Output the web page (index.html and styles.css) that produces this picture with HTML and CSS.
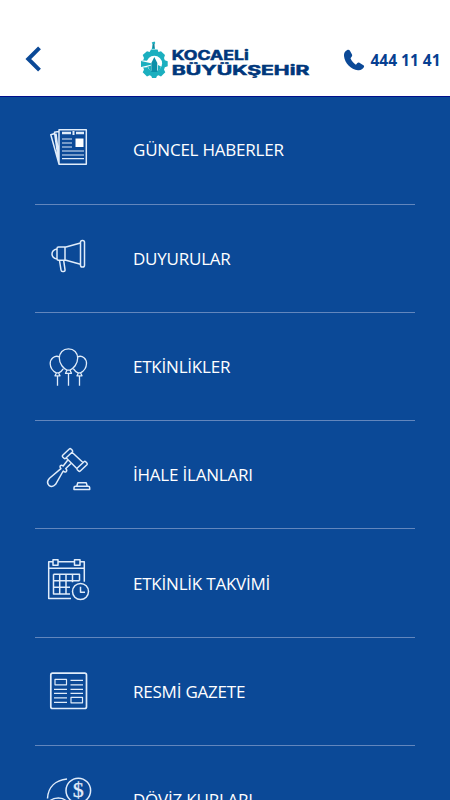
FILE: index.html
```html
<!DOCTYPE html>
<html lang="tr">
<head>
<meta charset="utf-8">
<title>Kocaeli Büyükşehir</title>
<link rel="stylesheet" href="styles.css">
</head>
<body>
<header class="header">
  <svg class="back" viewBox="0 0 20 26"><path d="M16.500 1.800 5.300 13l11.200 11.200" fill="none" stroke="#0b4997" stroke-width="4"/></svg>
  <svg class="logo" viewBox="130 34 190 54">
    <g fill="#1bafbf">
      <path d="M151.800 50l.7-5-.8-1.500 2.800-1 .8 1.500-1 1.500.7 4.500z"/>
      <path d="M151 50.500h6.600l.8 2.500 2.600-.8 4 3.800-1 2.900.8 2.400 2.900 1v5l-2.900 1-.8 2.400 1.300 2.600-4.300 4.300-2.600-1.300-1.400.8-.9 2h-4l-.9-2-1.600-.8-2.600 1.300-4.300-4.300 1.300-2.600-.8-2.400-2.200-.5v-6l2.200-.5.8-2.400-1.300-2.900 4.300-3.800 2.600.8z"/>
    </g>
    <circle cx="154.300" cy="64.500" r="7.800" fill="#fff"/>
    <path d="M140 61.300l7 .5v6.400l-7 .5z" fill="#fff"/>
    <path d="M141 62l10 2.200v1.600l-10 2.200zM148 67.500l3-1v5.500q-2.500-1.700-3-4.500zM158 66l3 1.500q-.5 3-3 4.500z" fill="#1bafbf"/>
    <path d="M151.300 73v-9l3-6 3 6v9z" fill="#0b8fa8"/>
    <path d="M153.300 45h1v4h-1z" fill="#276c82"/>
    <g class="logo-text">
      <text x="171.800" y="61.300" textLength="77" lengthAdjust="spacingAndGlyphs">KOCAELi</text>
      <text x="171.800" y="75.800" textLength="137.500" lengthAdjust="spacingAndGlyphs">BÜYÜKŞEHiR</text>
    </g>
  </svg>
  <a class="phone">
    <svg viewBox="0 0 22 22"><path d="M4.300 1C2.100 2 .7 4 1 7c.8 7.200 6.800 13.500 14 14.200 2.900.3 4.800-1 6-3.200.3-.8 0-1.400-.6-1.800l-4-2.500c-.8-.4-1.500-.2-2 .4l-1.500 1.600C10.800 14.300 8.500 12 7.500 9.200L8.800 7.500c.5-.6.500-1.200.2-1.900L6.800 1.500C6.200.8 5.200.6 4.300 1z" fill="#0b4997"/></svg>
    <span>444 11 41</span>
  </a>
</header>
<main class="menu">
  <div class="row">
    <svg class="icon" viewBox="0 -24 60 108">
      <path d="M19 9.700h27.300v34.600H19zM18.500 11.500l-4 .8 4.500 31.500M14 13.700l-3.200 1L19 44M16 13.700l3 25"/>
      <path d="M22 13h9M36 13h8" stroke-width="2.500"/><path d="M33.500 11v4" stroke-width="2"/>
      <path d="M22 19h10M22 23h10M22 27h10M22 31h22M22 35h22M22 38.700h22" stroke-width="1.200"/>
      <path d="M35.500 18.500h8v8.500h-8z" fill="#fff" stroke="none"/>
    </svg>
    <span>GÜNCEL HABERLER</span>
  </div>
  <div class="row">
    <svg class="icon" viewBox="0 -24 60 108">
      <rect x="40.500" y="12.500" width="4" height="26.500" rx="1.800"/>
      <path d="M40.500 15 26 19H18.500q-1.500 0-1.500 1.500v10.300q0 1.500 1.500 1.500H26l14.500 4M25 19v13M17 21q-5 1-5 5t5 5M19.500 32.500l1.500 9.500q.3 1.800 2 1.600h.5q1.800-.3 1.500-2l-1.300-9"/>
    </svg>
    <span>DUYURULAR</span>
  </div>
  <div class="row">
    <svg class="icon" viewBox="0 -25.300 60 108">
      <path d="M28.500 10.500c-5.500 0-9.200 4-9.200 9.300 0 6 4.300 10.400 7.700 12h3c3.400-1.600 7.700-6 7.700-12 0-5.300-3.700-9.300-9.200-9.300zM27 32l-1.500 3h6L30 32M28.500 35v12.500M19.500 18.500c-5-2-9.500 2-9.300 7 .2 4.500 3 7.500 6 9h2.500c2-1 3.500-2.300 4.500-4M37.500 18.500c5-2 9.300 2 9 7-.2 4.500-3 7.500-6 9H38c-2-1-3.500-2.300-4.500-4M16.500 34.500l-1.500 3h5l-1.500-3M38.500 34.500l-1.500 3h5l-1.500-3M17.500 37.500v10M39.500 37.500v10" stroke-width="1.300"/>
    </svg>
    <span>ETKİNLİKLER</span>
  </div>
  <div class="row">
    <svg class="icon" viewBox="0 -19 60 108">
      <path d="M29.300 9q.9-.8 1.700 0l1.300 1.300q.8.900 0 1.700l-6.600 6.300q-.9.800-1.700 0l-1.300-1.300q-.8-.9 0-1.700zM44 21.700q.9-.8 1.700 0l1.200 1.300q.8.900 0 1.700l-6.600 6.300q-.9.800-1.700 0l-1.300-1.300q-.8-.9 0-1.700zM32 12.300 43 22.500M26.300 18l10.500 10.500"/>
      <path d="M27.800 20l-4.600 6q-1.800-1.300-2.900-.2-.9 1.300.6 2.800L9.500 38.300q-3.600 3.900-.6 7 3.300 2.700 6.700-1L23.200 31q1.600 1.700 3 .6 1.200-1.300-.4-3.100l5.200-5"/>
      <path d="M34 49.500v-1.800q0-1.500 1.500-1.500h12.700q1.500 0 1.500 1.500v1.800zM36.800 46l1-3.200h8.400l1 3.200"/>
    </svg>
    <span>İHALE İLANLARI</span>
  </div>
  <div class="row">
    <svg class="icon" viewBox="0 -22.700 60 108">
      <path d="M13 10H8.700v36.700H31M18 10h16.500M40 10h4.300v20M9 16.500h35M13 8h5v5.500h-5zM34.500 8H40v5.500h-5.500zM13.500 22.500h26V29M13.500 22.500v19.800H26V22.500M13.500 29h26M13.500 35.500H30M19.700 22.500v19.800M32.500 22.500v8M26 42.300h4"/>
      <circle cx="40.500" cy="39.800" r="8"/><path d="M40.500 35v5.500H45"/>
    </svg>
    <span>ETKİNLİK TAKVİMİ</span>
  </div>
  <div class="row">
    <svg class="icon" viewBox="0 -26.300 60 108">
      <rect x="10.800" y="9.800" width="35.700" height="35.400" rx="1.800" stroke-width="1.700"/>
      <path d="M15 16h11.500v5.500H15zM31 34h11.500v5.500H31zM30.500 17H43M30.500 21.500H43M30.500 26H43M30.500 30H43M14 26h13M14 30h13M14 34.500h13M14 39h13" stroke-width="1.200"/>
    </svg>
    <span>RESMİ GAZETE</span>
  </div>
  <div class="row">
    <svg class="icon" viewBox="0 -24 60 108">
      <circle cx="38.300" cy="20.500" r="12.300"/>
      <path d="M7.500 28.500C8 16.500 16 10.200 27 9M10 30.500c5-3.500 12-3.500 16 0"/>
      <text class="coin" x="38.300" y="27" text-anchor="middle">$</text>
    </svg>
    <span>DÖVİZ KURLARI</span>
  </div>
</main>
</body>
</html>
```
FILE: styles.css
```css
* { box-sizing: border-box; }
html { overflow: hidden; }
body {
  margin: 0;
  height: 800px;
  overflow: hidden;
  background: #0b4997;
  font-family: "Open Sans", "Noto Sans", sans-serif;
}
.header {
  height: 97px;
  padding: 24px 9.500px 0 23px;
  display: flex;
  align-items: center;
  background: #fff;
  border-bottom: 1px solid #00108c;
}
.back { width: 20px; height: 26px; position: relative; top: -1px; }
.logo { width: 190px; height: 54px; margin-left: 87px; }
.logo-text {
  font-family: Inter, "Open Sans", sans-serif;
  font-size: 13px;
  font-weight: 700;
  fill: #00377b;
  stroke: #00377b;
  stroke-width: .5;
}
.phone {
  margin-left: auto;
  display: flex;
  align-items: center;
  gap: 5px;
  color: #073f91;
  font-size: 15.5px;
  font-weight: 700;
  white-space: nowrap;
}
.phone svg { width: 22px; height: 22px; }
.menu {
  height: 704px;
  margin: -1px 35px 0;
  overflow: hidden;
}
.row {
  height: 108.33px;
  display: flex;
  align-items: center;
  border-bottom: 1px solid #6286bd;
  color: #fff;
  font-size: 17px;
}
.row:first-child { height: 108.5px; }
.row span {
  margin-left: 33px;
  letter-spacing: -.22px;
  white-space: nowrap;
}
.icon {
  width: 60px;
  height: 108px;
  margin-left: 5px;
  flex: none;
  fill: none;
  stroke: #e0ecfa;
  stroke-width: 1.5;
  stroke-linejoin: round;
}
.coin {
  font-family: "Liberation Serif", serif;
  font-size: 22px;
  fill: #e0ecfa;
  stroke-width: .3;
}
```
